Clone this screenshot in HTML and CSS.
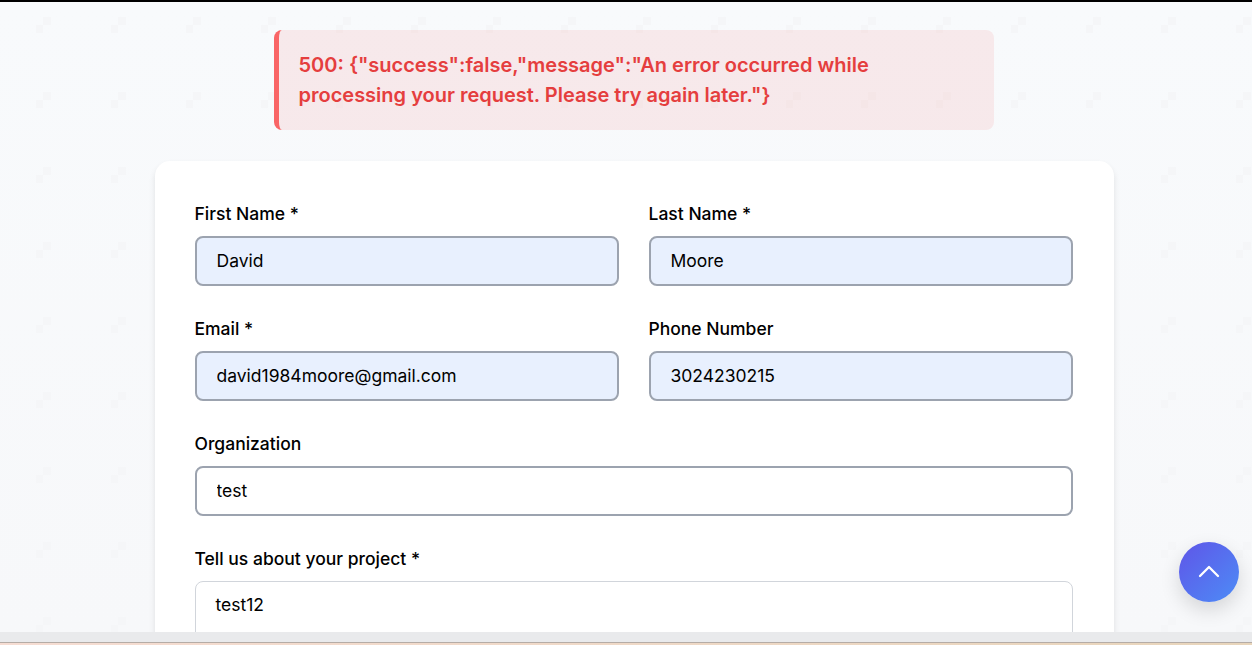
FILE: index.html
```html
<!DOCTYPE html>
<html lang="en">
<head>
<meta charset="utf-8">
<title>Contact</title>
<link rel="stylesheet" href="styles.css">
</head>
<body>
<main class="page">
  <div class="alert" role="alert">500: {"success":false,"message":"An error occurred while processing your request. Please try again later."}</div>
  <form class="card">
    <label class="field"><span class="label">First Name *</span><input class="input autofilled" type="text" value="David"></label>
    <label class="field"><span class="label">Last Name *</span><input class="input autofilled" type="text" value="Moore"></label>
    <label class="field"><span class="label">Email *</span><input class="input autofilled" type="email" value="david1984moore@gmail.com"></label>
    <label class="field"><span class="label">Phone Number</span><input class="input autofilled" type="tel" value="3024230215"></label>
    <label class="field wide"><span class="label">Organization</span><input class="input" type="text" value="test"></label>
    <label class="field wide"><span class="label">Tell us about your project *</span><textarea class="textarea">test12</textarea></label>
  </form>
  <button class="to-top" type="button" aria-label="Back to top">
    <svg width="24" height="24" viewBox="0 0 24 24" fill="none" stroke="#fff" stroke-width="2.3" stroke-linecap="round" stroke-linejoin="round"><path d="M3 16 12 7l9 9"/></svg>
  </button>
</main>
<footer class="strip"></footer>
</body>
</html>
```

FILE: styles.css
```css
* { box-sizing: border-box; }
body {
  margin: 0;
  height: 645px;
  overflow: hidden;
  display: flex;
  flex-direction: column;
  font-family: Inter, "Liberation Sans", sans-serif;
  color: #000;
}
.page {
  position: relative;
  height: 632px;
  flex: none;
  overflow: hidden;
  padding: 28px 0 0 16px;
  border-top: 2px solid #000;
  display: flex;
  flex-direction: column;
  align-items: center;
  gap: 31px;
  background:
    url("data:image/svg+xml,%3Csvg xmlns='http://www.w3.org/2000/svg' width='75' height='75'%3E%3Cpath d='M36 23h7v8h-7zM43 15h8v8h-8z' fill='%23f5f6f8'/%3E%3C/svg%3E"),
    linear-gradient(#f8fafc, #f7f8fa);
}
.alert {
  flex: none;
  width: 720px;
  height: 100px;
  padding: 20px 60px 20px 19.5px;
  border-left: 5px solid #f96566;
  border-radius: 8px;
  background: rgba(245, 90, 90, 0.1);
  color: #e53e3e;
  font-size: 20px;
  font-weight: 600;
  line-height: 30px;
}
.card {
  flex: none;
  width: 959px;
  height: 620px;
  padding: 40px 40.5px;
  border-radius: 15px;
  background: #fff;
  box-shadow: 0 4px 6px rgba(0, 0, 0, 0.1);
  display: grid;
  grid-template-columns: 1fr 1fr;
  grid-auto-rows: 85px;
  gap: 30px;
}
.field { display: flex; flex-direction: column; gap: 10px; }
.wide { grid-column: 1 / -1; }
.label { height: 25px; margin-left: -0.5px; line-height: 25px; font-size: 17.5px; font-weight: 500; }
.input {
  width: 100%;
  height: 50px;
  padding: 0 19.5px 2px;
  border: 2px solid #9ca3af;
  border-radius: 8px;
  background: #fff;
  color: #000;
  font: 400 17.5px Inter, sans-serif;
}
.autofilled { background: #e8f0fe; }
.textarea {
  width: 100%;
  height: 160px;
  flex: none;
  padding: 10px 19.5px;
  border: 1px solid #d1d5db;
  border-radius: 8px;
  resize: none;
  color: #000;
  font: 400 17.5px/25px Inter, sans-serif;
}
.to-top {
  position: absolute;
  right: 13px;
  bottom: 30px;
  width: 60px;
  height: 60px;
  padding: 0;
  border: 0;
  border-radius: 50%;
  display: grid;
  place-items: center;
  background: linear-gradient(135deg, #5f55e8, #4d8cf6);
  box-shadow: 0 8px 20px rgba(0, 0, 0, 0.14);
}
.strip {
  height: 13px;
  flex: none;
  border-top: 10px solid #e9eaec;
  background:
    linear-gradient(#b5aca6, #b5aca6) 0 0 / 100% 1px no-repeat,
    linear-gradient(90deg, #f6ddd3, #e8d5bb);
}
```
